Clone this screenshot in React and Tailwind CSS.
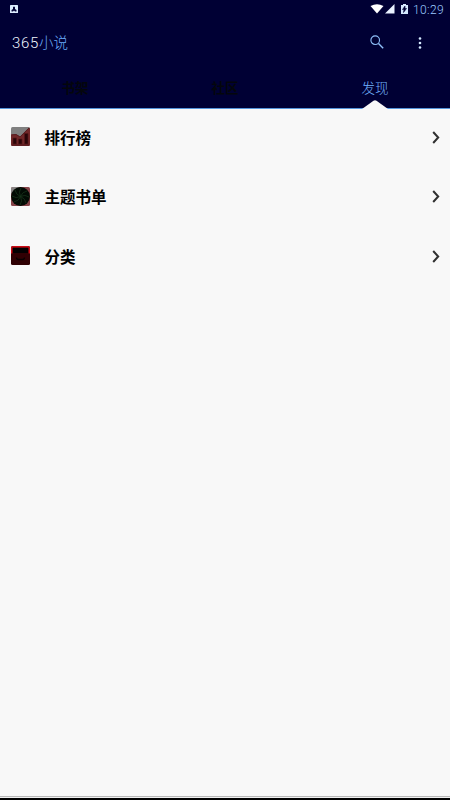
import React from "react";

const RankIcon = () => (
  <svg width="19" height="19" viewBox="0 0 19 19">
    <rect width="19" height="19" rx="1.500" fill="#808080" />
    <path d="M0 7.500L5 7l4 2.500L18 0.500l1 1V17.500q0 1.500-1.500 1.500h-16Q0 19 0 17.500z" fill="#702728" />
    <path d="M0.500 8L5 7.500l4 2.500 9-9" stroke="#571f21" strokeWidth="1" fill="none" />
    <path d="M2 11h3.500v6H2zM7.500 12H11v5H7.500zM13.500 6.500H17V17h-3.500z" fill="#290508" stroke="#551719" strokeWidth="0.700" />
    <path d="M1 18h17" stroke="#50171a" />
  </svg>
);

const TopicIcon = () => (
  <svg width="19" height="19" viewBox="0 0 19 19">
    <rect width="19" height="19" rx="1.500" fill="#854348" />
    <path d="M0 7V1.500Q0 0 1.500 0H8z" fill="#888484" />
    <circle cx="9.500" cy="9.500" r="9.400" fill="#020b04" />
    <g stroke="#16331a" strokeWidth="0.800" fill="none">
      <path d="M9.500 9.500Q7 5 10 1M9.500 9.500Q11 5 16 4M9.500 9.500Q14 7 18 10M9.500 9.500Q14 11 15 16" />
      <path d="M9.500 9.500Q12 14 9 18M9.500 9.500Q8 14 3 15M9.500 9.500Q5 12 1 9M9.500 9.500Q5 8 4 3" />
    </g>
  </svg>
);

const CategoryIcon = () => (
  <svg width="19" height="19" viewBox="0 0 19 19">
    <rect width="19" height="19" rx="1.500" fill="#300003" />
    <path d="M0.700 7.500V2Q0.700 0.700 2 0.700h15q1.300 0 1.300 1.300v5.500" stroke="#cc0c15" strokeWidth="1.400" fill="none" />
    <path d="M2 2h15v5H2z" fill="#030001" />
    <path d="M5.500 11.500q0 2 2 2h4q2 0 2-2" stroke="#080001" strokeWidth="1.300" fill="none" />
  </svg>
);

const items = [
  { label: "排行榜", icon: RankIcon },
  { label: "主题书单", icon: TopicIcon },
  { label: "分类", icon: CategoryIcon },
];

const StatusBar = () => (
  <div className="flex h-[18px] items-center justify-between pl-[10px] pr-[6px]">
    <svg width="8" height="8" viewBox="0 0 8 8">
      <rect width="8" height="8" rx="0.500" fill="#dcecff" />
      <path d="M1.500 6.500V5L3 4V2.300Q4 0.800 5 2.300V4l1.500 1v1.500H5L4 5.500 3 6.500z" fill="#000034" />
    </svg>
    <div className="flex items-center">
      <svg width="14" height="10" viewBox="0 0 14 10">
        <path d="M0.500 2Q7-1.500 13.500 2L7 9.500z" fill="#fff" />
      </svg>
      <svg className="ml-[1px]" width="10" height="10" viewBox="0 0 10 10">
        <path d="M9.500 0v9.500H0z" fill="#e9f2ff" />
      </svg>
      <svg className="ml-[6px]" width="7" height="10" viewBox="0 0 7 10">
        <path d="M2 0h3v1h2v9H0V1h2z" fill="#d5e9ff" />
        <path d="M4 2L1.500 5.500H3L2.500 8.500 5.500 4.500H4z" fill="#000034" stroke="#000034" strokeWidth="0.600" />
      </svg>
      <span className="ml-[5px] mt-px w-[31px] whitespace-nowrap text-[12px] font-light leading-none tracking-[0.400px] text-[#9ccaff]">
        10:29
      </span>
    </div>
  </div>
);

const Toolbar = () => (
  <div className="flex h-[50px] items-center pl-3 pr-[28px]">
    <h1 className="flex flex-1 items-center leading-none">
      <span className="text-[15px] font-light tracking-[0.700px] text-[#eff7ff]">365</span>
      <span className="mt-[2px] text-[14.500px] font-light text-[#6aacfa]">小说</span>
    </h1>
    <svg className="-mt-[2px]" width="14" height="14" viewBox="0 0 14 14" fill="none" stroke="#8fc0fa">
      <circle cx="5.200" cy="5.200" r="4.300" strokeWidth="1.100" />
      <path d="M8.500 8.500l4.700 4.700" strokeWidth="1.400" />
    </svg>
    <svg className="-mt-px ml-[34px]" width="4" height="12" viewBox="0 0 4 12" fill="#d5e9ff">
      <circle cx="2" cy="1.500" r="1.300" />
      <circle cx="2" cy="6" r="1.300" />
      <circle cx="2" cy="10.500" r="1.300" />
    </svg>
  </div>
);

const Tabs = () => (
  <div className="grid h-[41px] grid-cols-3 border-b border-[#5595dc] text-center text-[13.500px] leading-[40px]">
    <div className="font-bold text-[#04060c]">书架</div>
    <div className="font-bold text-[#04060c]">社区</div>
    <div className="relative font-light text-[#75b4ff]">
      发现
      <svg className="absolute -bottom-px left-[62px]" width="26" height="9" viewBox="0 0 26 9">
        <path d="M0 9L11.500 0.700Q13-0.300 14.500 0.700L26 9z" fill="#f8f8f8" />
      </svg>
    </div>
  </div>
);

export default function App() {
  return (
    <div className="flex h-[800px] w-[450px] flex-col overflow-hidden bg-[#f8f8f8] font-['Roboto','Noto_Sans_CJK_SC',sans-serif]">
      <header className="bg-[#000034]">
        <StatusBar />
        <Toolbar />
        <Tabs />
      </header>
      <main className="flex-1">
        {items.map(({ label, icon: Icon }) => (
          <div key={label} className="flex h-[59.500px] items-start pl-[11px] pr-[10px] pt-[18px]">
            <Icon />
            <span className="ml-[14.500px] mt-[0.500px] flex-1 text-[15.500px] font-bold leading-[22px] text-black">
              {label}
            </span>
            <svg className="mt-[3.500px]" width="8" height="13" viewBox="0 0 8 13">
              <path d="M1.200 1l5 5.500-5 5.500" stroke="#303030" strokeWidth="2" fill="none" />
            </svg>
          </div>
        ))}
      </main>
      <div className="h-px bg-[#b8b8b8]" />
      <div className="h-px bg-[#f0f0f0]" />
      <div className="h-[2px] bg-black" />
    </div>
  );
}
